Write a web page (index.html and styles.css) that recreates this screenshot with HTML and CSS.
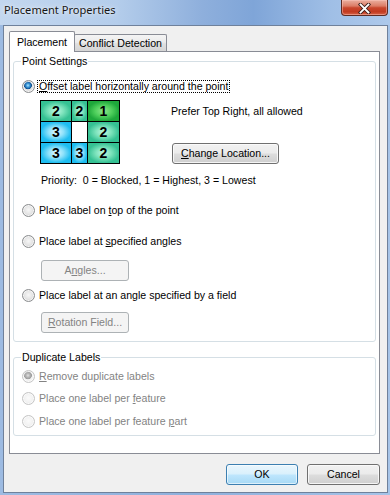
FILE: index.html
```html
<!DOCTYPE html>
<html>
<head>
<meta charset="utf-8">
<title>Placement Properties</title>
<link rel="stylesheet" href="styles.css">
</head>
<body>
<div class="window">
  <div class="titlebar">
    <span class="title">Placement Properties</span>
    <div class="close">
      <svg width="13" height="11" viewBox="0 0 13 11"><path d="M2.5 1.5 L10.5 9.5 M10.5 1.5 L2.5 9.5" stroke="#3b1f1a" stroke-width="3.6" stroke-linecap="square" fill="none"/><path d="M2.5 1.5 L10.5 9.5 M10.5 1.5 L2.5 9.5" stroke="#ffffff" stroke-width="1.8" stroke-linecap="square" fill="none"/></svg>
    </div>
  </div>
  <div class="client">
    <div class="tabs">
      <div class="tab active">Placement</div>
      <div class="tab">Conflict Detection</div>
    </div>
    <div class="panel">
      <fieldset class="group g1">
        <legend>Point Settings</legend>
        <div class="opt r1"><span class="radio checked"></span><span class="focus"><u>O</u>ffset label horizontally around the point</span></div>
        <div class="offset">
          <div class="grid">
            <div class="cell c2">2</div>
            <div class="cell c2">2</div>
            <div class="cell c1">1</div>
            <div class="cell c3">3</div>
            <div class="cell c0"></div>
            <div class="cell c2">2</div>
            <div class="cell c3">3</div>
            <div class="cell c3">3</div>
            <div class="cell c2">2</div>
          </div>
          <div class="side">
            <div class="prefer">Prefer Top Right, all allowed</div>
            <div class="btn change"><u>C</u>hange Location...</div>
          </div>
        </div>
        <div class="priority">Priority:&nbsp; 0 = Blocked, 1 = Highest, 3 = Lowest</div>
        <div class="opt r2"><span class="radio"></span><span class="lbl">Place label on <u>t</u>op of the point</span></div>
        <div class="opt r3"><span class="radio"></span><span class="lbl">Place label at <u>s</u>pecified angles</span></div>
        <div class="btn sub disabled b-angles">A<u>n</u>gles...</div>
        <div class="opt r4"><span class="radio"></span><span class="lbl">Place label at an angle specified by a field</span></div>
        <div class="btn sub disabled b-rot"><u>R</u>otation Field...</div>
      </fieldset>
      <fieldset class="group g2">
        <legend>Duplicate Labels</legend>
        <div class="opt d1 off"><span class="radio checked"></span><span class="lbl"><u>R</u>emove duplicate labels</span></div>
        <div class="opt d2 off"><span class="radio"></span><span class="lbl">Place one label per <u>f</u>eature</span></div>
        <div class="opt d3 off"><span class="radio"></span><span class="lbl">Place one label per feature <u>p</u>art</span></div>
      </fieldset>
    </div>
    <div class="actions">
      <div class="btn default ok">OK</div>
      <div class="btn cancel">Cancel</div>
    </div>
  </div>
</div>
</body>
</html>
```
FILE: styles.css
```css
* { box-sizing: border-box; }
html, body { margin: 0; padding: 0; }
body {
  width: 390px;
  height: 495px;
  overflow: hidden;
  font-family: "Liberation Sans", Arial, sans-serif;
  font-size: 10.6px;
  line-height: 13px;
  color: #000;
}
u { text-decoration: underline; text-underline-offset: 1px; }

.window {
  width: 390px;
  height: 495px;
  display: flex;
  flex-direction: column;
  background: linear-gradient(90deg, #9dbbe2 0%, #8fb0dc 50%, #a6c4e8 100%);
}
.titlebar {
  height: 25px;
  flex: none;
  display: flex;
  justify-content: space-between;
  align-items: flex-start;
  padding: 0 2px 0 4px;
  background: linear-gradient(90deg, #c3d7ef 0%, #b4cdeb 30%, #8eafdc 52%, #7fa5d8 65%, #a0bfe6 85%, #adc9eb 100%);
}
.title {
  font-family: "Noto Sans", "Open Sans", sans-serif;
  font-size: 11.1px;
  line-height: 14px;
  margin-top: 3px;
  color: #161616;
  text-shadow: 0 0 6px rgba(255,255,255,0.8), 0 0 2px rgba(255,255,255,0.6);
}
.close {
  width: 47px;
  height: 16px;
  border: 1px solid #5e2b22;
  border-top: none;
  border-radius: 0 0 4px 4px;
  background: linear-gradient(#eab0a0 0%, #dc7d66 40%, #c9472d 52%, #c23a20 78%, #d76449 100%);
  box-shadow: inset 0 0 0 1px rgba(255, 205, 195, 0.45);
  display: flex;
  align-items: center;
  justify-content: center;
}
.close svg { display: block; margin-top: 1px; }

.client {
  flex: 1;
  margin: 0 2px 2px 3px;
  border: 1px solid #6f819b;
  background: #f0f0f0;
  padding: 5px 7px 0 5px;
  display: flex;
  flex-direction: column;
}

.tabs {
  height: 20px;
  display: flex;
  align-items: flex-end;
}
.tab {
  border: 1px solid #898c95;
  border-bottom: none;
  text-align: center;
  white-space: nowrap;
}
.tab.active {
  width: 66px;
  height: 21px;
  margin-bottom: -1px;
  padding-top: 4px;
  background: #fff;
  border-radius: 2px 2px 0 0;
  position: relative;
  z-index: 2;
}
.tab:not(.active) {
  width: 93px;
  height: 17px;
  margin-left: -1px;
  padding-top: 2px;
  background: linear-gradient(#f4f4f4 0%, #ececec 45%, #dfdfdf 55%, #d5d5d5 100%);
  border-radius: 2px 2px 0 0;
}

.panel {
  height: 403px;
  flex: none;
  border: 1px solid #898c95;
  background: #fff;
  padding: 0 3px;
}

.group {
  margin: 0;
  min-width: 0;
  border: 1px solid #d5dfe5;
  border-radius: 3px;
  padding: 0;
}
.group legend {
  margin-left: 7px;
  padding: 0 1px;
  line-height: 13px;
}
.g1 { margin-top: 3px; padding-bottom: 8px; }
.g2 { margin-top: 9px; padding-bottom: 7px; }

.opt {
  height: 13px;
  display: flex;
  align-items: center;
  margin-left: 8px;
  white-space: nowrap;
}
.opt .lbl { margin-left: 4px; }
.opt.off .lbl { color: #838383; }

.radio {
  flex: none;
  width: 13px;
  height: 13px;
  border-radius: 50%;
  border: 1px solid #8b8d8f;
  background: radial-gradient(circle at 50% 45%, #f7f7f7 0%, #e6e6e6 45%, #cfcfcf 80%, #c4c4c4 100%);
  box-shadow: inset 0 0 0 1px rgba(255,255,255,0.7);
}
.radio.checked {
  background:
    radial-gradient(circle at 45% 40%, #b7e6fb 0px, #4aa6e2 1.5px, #1b68ad 3px, #0f4c87 3.6px, rgba(0,0,0,0) 4.2px),
    radial-gradient(circle at 50% 45%, #f7f7f7 0%, #e6e6e6 45%, #cfcfcf 80%, #c4c4c4 100%);
}
.off .radio {
  border-color: #c5c5c5;
  background: radial-gradient(circle at 50% 45%, #fbfbfb 0%, #f2f2f2 50%, #e3e3e3 100%);
}
.off .radio.checked {
  background:
    radial-gradient(circle at 45% 40%, #e2e2e2 0px, #b5b5b5 2px, #9c9c9c 3.6px, rgba(0,0,0,0) 4.2px),
    radial-gradient(circle at 50% 45%, #fbfbfb 0%, #f2f2f2 50%, #e3e3e3 100%);
}

.focus {
  display: inline-block;
  margin-left: 2px;
  padding: 0 1px;
  line-height: 11px;
  border: 1px dotted #000;
}

.r1 { margin-top: 12px; }

.offset {
  display: flex;
  margin-top: 7px;
  margin-left: 26px;
}
.grid {
  flex: none;
  width: 80px;
  height: 64px;
  display: grid;
  grid-template-columns: 30px 15px 31px;
  grid-template-rows: 20px 20px 20px;
  gap: 1px;
  padding: 1px;
  background: #000;
}
.cell {
  display: flex;
  align-items: center;
  justify-content: center;
  font-weight: bold;
  font-size: 14px;
  line-height: 14px;
}
.c0 { background: #fff; }
.c1 { background: radial-gradient(ellipse farthest-side at 50% 50%, #8fe68c 0%, #4fcf5c 55%, #1ea83b 100%); }
.c2 { background: radial-gradient(ellipse farthest-side at 50% 50%, #bff7e2 0%, #7de3bc 50%, #35c193 100%); }
.c3 { background: radial-gradient(ellipse farthest-side at 50% 50%, #dff7ff 0%, #8fe2fb 50%, #1ebdf0 100%); }

.side {
  margin-left: 51px;
  display: flex;
  flex-direction: column;
  align-items: flex-start;
}
.prefer { margin-top: 5px; white-space: nowrap; }

.btn {
  height: 21px;
  border: 1px solid #707070;
  border-radius: 3px;
  background: linear-gradient(#f2f2f2 0%, #ebebeb 48%, #dddddd 52%, #cfcfcf 100%);
  box-shadow: inset 0 0 0 1px rgba(252,252,252,0.85);
  text-align: center;
  line-height: 18px;
  white-space: nowrap;
}
.btn.change { width: 107px; margin-top: 25px; margin-left: 1px; }
.btn.disabled {
  border-color: #adb2b5;
  background: #f4f4f4;
  box-shadow: none;
  color: #838383;
}
.btn.sub { width: 88px; margin-left: 27px; }
.b-angles { margin-top: 12px; }
.b-rot { margin-top: 10px; }

.priority { margin-top: 10px; margin-left: 27px; white-space: nowrap; }
.r2 { margin-top: 17px; }
.r3 { margin-top: 18px; }
.r4 { margin-top: 8px; }

.d1 { margin-top: 6px; }
.d2 { margin-top: 9px; }
.d3 { margin-top: 10px; }

.actions {
  margin-top: 10px;
  display: flex;
  justify-content: flex-end;
  gap: 9px;
}
.btn.ok { width: 72px; }
.btn.cancel { width: 73px; }
.btn.default {
  border-color: #3c7fb1;
  background: linear-gradient(#eaf6fd 0%, #d9f0fc 48%, #bee6fd 52%, #a7d9f5 100%);
  box-shadow: inset 0 0 0 1px rgba(255,255,255,0.6);
}
```
